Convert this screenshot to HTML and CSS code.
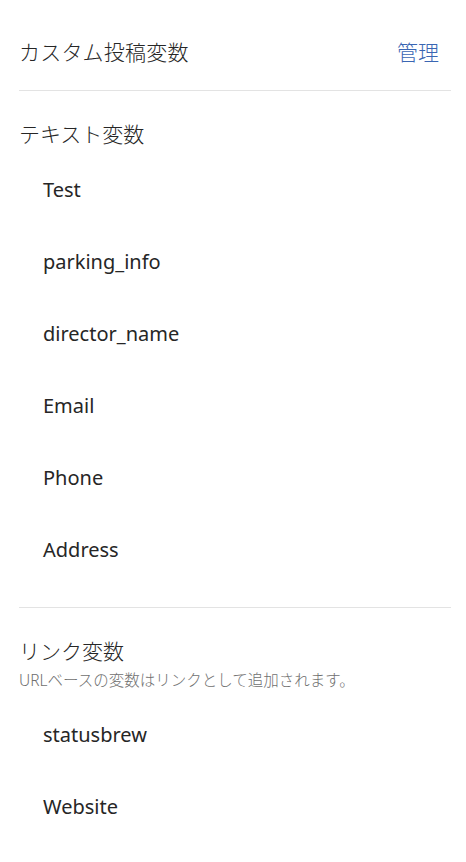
FILE: index.html
```html
<!DOCTYPE html>
<html lang="ja">
<head>
<meta charset="utf-8">
<link rel="stylesheet" href="styles.css">
</head>
<body>
<div class="panel">
  <div class="header">
    <span class="title">カスタム投稿変数</span>
    <a class="manage">管理</a>
  </div>
  <section class="section section-text">
    <h2 class="section-title">テキスト変数</h2>
    <ul class="list">
      <li class="item">Test</li>
      <li class="item">parking_info</li>
      <li class="item">director_name</li>
      <li class="item">Email</li>
      <li class="item">Phone</li>
      <li class="item">Address</li>
    </ul>
  </section>
  <section class="section section-link">
    <h2 class="section-title">リンク変数</h2>
    <p class="section-sub">URLベースの変数はリンクとして追加されます。</p>
    <ul class="list list-link">
      <li class="item">statusbrew</li>
      <li class="item">Website</li>
    </ul>
  </section>
</div>
</body>
</html>
```
FILE: styles.css
```css
html, body {
  margin: 0;
  padding: 0;
  background: #ffffff;
}
body {
  font-family: "Noto Sans", "Noto Sans CJK JP", sans-serif;
  color: #262626;
}
.panel {
  padding: 0 15px 0 19px;
}
.header {
  display: flex;
  align-items: center;
  justify-content: space-between;
  height: 64px;
  padding-top: 20px;
  padding-bottom: 6px;
  border-bottom: 1px solid #e3e3e3;
}
.title {
  font-size: 21px;
  line-height: 28px;
  font-weight: 300;
  letter-spacing: 0.2px;
}
.manage {
  font-size: 21px;
  line-height: 28px;
  font-weight: 300;
  color: #3a66b3;
  margin-right: 12px;
  cursor: pointer;
}
.section-text {
  padding-top: 29px;
  padding-bottom: 22px;
  border-bottom: 1px solid #e3e3e3;
}
.section-link {
  padding-top: 29px;
}
.section-title {
  margin: 0;
  font-size: 21px;
  font-weight: 300;
  line-height: 28px;
}
.section-sub {
  margin: 4px 0 0;
  font-size: 15.5px;
  line-height: 22px;
  font-weight: 300;
  color: #6f6f6f;
}
.list {
  list-style: none;
  margin: 5px 0 0;
  padding: 0;
}
.list-link {
  margin-top: 7px;
}
.item {
  height: 72px;
  display: flex;
  align-items: center;
  padding-left: 24px;
  font-size: 20px;
}
```
